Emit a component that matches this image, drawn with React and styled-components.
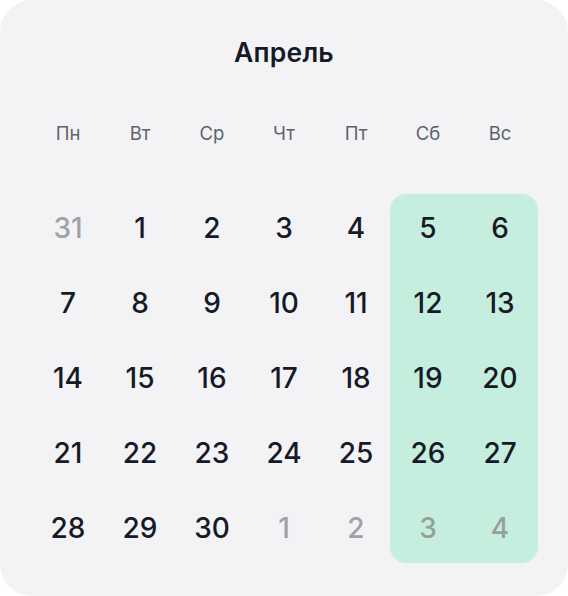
import React from 'react';
import styled, { createGlobalStyle } from 'styled-components';

const GlobalStyle = createGlobalStyle`
  html, body {
    margin: 0;
    padding: 0;
    background: #fff;
  }
  * {
    box-sizing: border-box;
  }
`;

const Card = styled.div`
  width: 568px;
  height: 596px;
  border-radius: 32px;
  background: #f3f3f6;
  padding: 36px 32px 0;
  font-family: Inter, "Noto Sans", sans-serif;
  color: #161a26;
`;

const Title = styled.h2`
  margin: 0;
  text-align: center;
  font-size: 26.5px;
  line-height: 32px;
  font-weight: 600;
  letter-spacing: 0.2px;
`;

const Weekdays = styled.div`
  margin-top: 50px;
  display: grid;
  grid-template-columns: repeat(7, 72px);
`;

const Weekday = styled.div`
  text-align: center;
  font-size: 18.5px;
  line-height: 30px;
  color: #5d6270;
`;

const Days = styled.div`
  margin-top: 42px;
  display: grid;
  grid-template-columns: repeat(7, 72px);
  grid-template-rows: repeat(5, 75px);
`;

const Weekend = styled.div`
  grid-column: 6 / 8;
  grid-row: 1 / 6;
  margin: 4px -2px 2px;
  border-radius: 16px;
  background: #c5eedf;
`;

const Day = styled.div`
  grid-column: ${p => p.$col};
  grid-row: ${p => p.$row};
  position: relative;
  display: flex;
  align-items: center;
  justify-content: center;
  font-size: 28px;
  font-weight: 500;
  color: ${p => (p.$muted ? (p.$col > 5 ? '#95a09c' : '#a0a2a8') : '#161a26')};
`;

const weekdays = ['Пн', 'Вт', 'Ср', 'Чт', 'Пт', 'Сб', 'Вс'];

const cells = [31, ...Array.from({ length: 30 }, (_, i) => i + 1), 1, 2, 3, 4].map((n, i) => ({
  n,
  muted: i === 0 || i > 30,
  col: (i % 7) + 1,
  row: Math.floor(i / 7) + 1,
}));

const App = () => (
  <>
    <GlobalStyle />
    <Card>
      <Title>Апрель</Title>
      <Weekdays>
        {weekdays.map(d => <Weekday key={d}>{d}</Weekday>)}
      </Weekdays>
      <Days>
        <Weekend />
        {cells.map((c, i) => (
          <Day key={i} $col={c.col} $row={c.row} $muted={c.muted}>{c.n}</Day>
        ))}
      </Days>
    </Card>
  </>
);

export default App;
